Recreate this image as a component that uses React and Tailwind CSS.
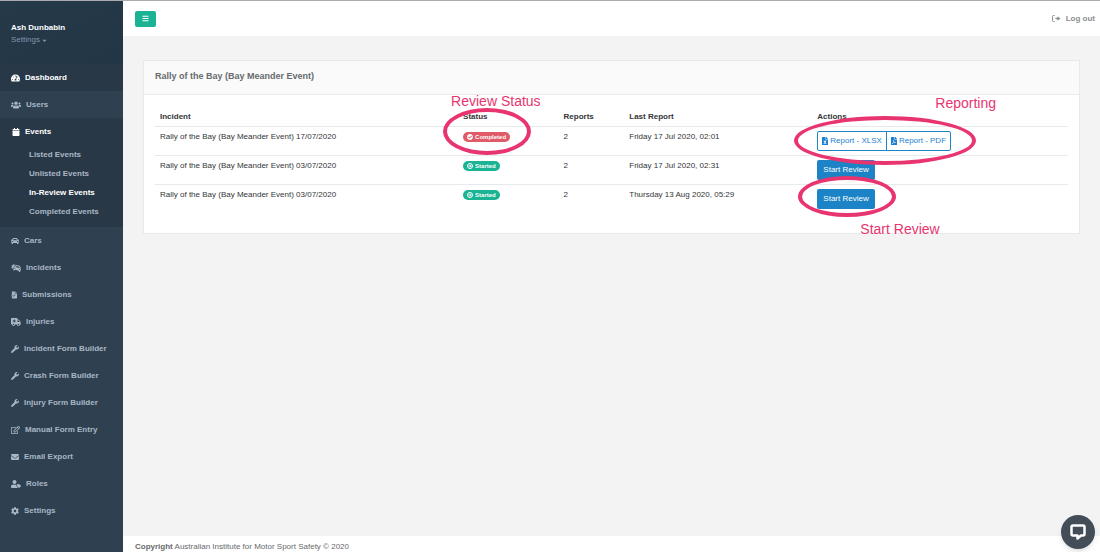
import { useState } from "react";

//PACKAGES
import clsx from "clsx";
import {
  FaAmbulance,
  FaBars,
  FaCar,
  FaCarCrash,
  FaCaretDown,
  FaCheckCircle,
  FaCog,
  FaEnvelope,
  FaFileExcel,
  FaFileMedicalAlt,
  FaFilePdf,
  FaRegEdit,
  FaTachometerAlt,
  FaUserTag,
  FaUsers,
  FaWrench,
} from "react-icons/fa";

//CONSTANTS
const EVENT_LINKS = [
  "Listed Events",
  "Unlisted Events",
  "In-Review Events",
  "Completed Events",
];

const MENU = [
  { label: "Dashboard", icon: FaTachometerAlt, size: "w-[9px]", dark: true },
  { label: "Users", icon: FaUsers, size: "w-[10px]" },
  { label: "Events", icon: CalendarIcon, size: "w-[9px]", dark: true, children: EVENT_LINKS },
  { label: "Cars", icon: FaCar, size: "w-2" },
  { label: "Incidents", icon: FaCarCrash, size: "w-[10px]" },
  { label: "Submissions", icon: FaFileMedicalAlt, size: "w-[6px]" },
  { label: "Injuries", icon: FaAmbulance, size: "w-[10px]" },
  { label: "Incident Form Builder", icon: FaWrench, size: "w-2" },
  { label: "Crash Form Builder", icon: FaWrench, size: "w-2" },
  { label: "Injury Form Builder", icon: FaWrench, size: "w-2" },
  { label: "Manual Form Entry", icon: FaRegEdit, size: "w-[9px]" },
  { label: "Email Export", icon: FaEnvelope, size: "w-2" },
  { label: "Roles", icon: FaUserTag, size: "w-[10px]" },
  { label: "Settings", icon: FaCog, size: "w-2" },
];

const ROWS = [
  { incident: "Rally of the Bay (Bay Meander Event) 17/07/2020", status: "Completed", reports: 2, last: "Friday 17 Jul 2020, 02:01" },
  { incident: "Rally of the Bay (Bay Meander Event) 03/07/2020", status: "Started", reports: 2, last: "Friday 17 Jul 2020, 02:31" },
  { incident: "Rally of the Bay (Bay Meander Event) 03/07/2020", status: "Started", reports: 2, last: "Thursday 13 Aug 2020, 05:29" },
];

//ICONS
function CalendarIcon({ className }) {
  return (
    <svg viewBox="0 0 18 16" className={className} fill="currentColor">
      <path d="M6 0h2v2h4V0h2v2h1.500a1.500 1.500 0 0 1 1.500 1.500V5H3V3.500A1.500 1.500 0 0 1 4.500 2H6zM3 6h14v8.500a1.500 1.500 0 0 1-1.500 1.500h-11A1.500 1.500 0 0 1 3 14.500z" />
    </svg>
  );
}

function StartedIcon() {
  return (
    <svg viewBox="0 0 12 12" className="size-[6px]" fill="none" stroke="currentColor" strokeWidth="2">
      <circle cx="6" cy="6" r="5" />
      <path d="M3 6h5M6 3.500 8.500 6 6 8.500" />
    </svg>
  );
}

function LogoutIcon() {
  return (
    <svg viewBox="0 0 18 14" className="h-[7px] w-[9px]" fill="none" stroke="currentColor" strokeWidth="2">
      <path d="M5.500 1H3a2 2 0 0 0-2 2v8a2 2 0 0 0 2 2h2.500" />
      <path d="M7 7h5" strokeWidth="3" />
      <path d="M11 2.500 17 7l-6 4.500z" fill="currentColor" stroke="none" />
    </svg>
  );
}

function Sidebar({ active, onSelect }) {
  return (
    <nav className="w-[123px] shrink-0 bg-[#2f4050] text-[8px] leading-3 font-bold text-[#a9b7c6]">
      <div className="h-[63px] pt-[21px] pl-[11px] bg-linear-to-br from-[#263949] to-[#233646]">
        <div className="text-white">Ash Dunbabin</div>
        <button type="button" className="flex items-center gap-px font-normal text-[#8095a8]">
          Settings <FaCaretDown className="size-[7px]" />
        </button>
      </div>
      <ul>
        {MENU.map(({ label, icon: Icon, size, dark, children }) => (
          <li key={label} className={clsx(dark && "bg-[#293846]")}>
            <a href="#" className={clsx("flex h-[27px] items-center gap-[5px] pl-[11px]", dark && "text-white")}>
              <Icon className={clsx("h-2", size)} />
              {label}
            </a>
            {children && (
              <ul className="pb-[6px]">
                {children.map((child) => (
                  <li key={child}>
                    <a
                      href="#"
                      onClick={() => onSelect(child)}
                      className={clsx("flex h-[19px] items-center pl-[29px]", child === active && "text-white")}
                    >
                      {child}
                    </a>
                  </li>
                ))}
              </ul>
            )}
          </li>
        ))}
      </ul>
    </nav>
  );
}

function StatusBadge({ status }) {
  const completed = status === "Completed";
  return (
    <span
      className={clsx(
        "inline-flex h-[10px] items-center gap-[2px] rounded-full px-1 align-middle text-[6px] leading-[10px] font-bold text-white",
        completed ? "bg-[#e05a67]" : "bg-[#1ab394]"
      )}
    >
      {completed ? <FaCheckCircle className="size-[6px]" /> : <StartedIcon />}
      {status}
    </span>
  );
}

function ReportButtons() {
  return (
    <div className="inline-flex h-5 text-[8px] whitespace-nowrap text-[#1c7fd0]">
      <button type="button" className="flex items-center gap-[2px] rounded-l-[2px] border border-[#1c84c6] bg-white px-1">
        <FaFileExcel className="h-2 w-[6px]" /> Report - XLSX
      </button>
      <button type="button" className="-ml-px flex items-center gap-[2px] rounded-r-[2px] border border-[#1c84c6] bg-white px-1">
        <FaFilePdf className="h-2 w-[6px]" /> Report - PDF
      </button>
    </div>
  );
}

// Ring with a caption, laid over the table
function Callout({ ring, caption, text }) {
  return (
    <>
      <span className={clsx("pointer-events-none absolute z-10 rounded-[50%] border-4 border-[#e8356f]", ring)} />
      <span className={clsx("pointer-events-none absolute z-10 text-[14px] leading-4 whitespace-nowrap text-[#e8356f]", caption)}>
        {text}
      </span>
    </>
  );
}

function IncidentTable() {
  return (
    <table className="w-full table-fixed text-left text-[8px] leading-3 text-[#333537]">
      <thead>
        <tr>
          <th className="w-[33.2%] px-[5px] pt-[5px] pb-[3px]">Incident</th>
          <th className="w-[11%] px-[5px] pt-[5px] pb-[3px]">Status</th>
          <th className="w-[7.2%] px-[5px] pt-[5px] pb-[3px]">Reports</th>
          <th className="w-[20.6%] px-[5px] pt-[5px] pb-[3px]">Last Report</th>
          <th className="px-[5px] pt-[5px] pb-[3px]">Actions</th>
        </tr>
      </thead>
      <tbody>
        {ROWS.map((row, index) => (
          <tr key={index} className="border-t border-[#e7eaec] align-top">
            <td className="px-[5px] py-1">{row.incident}</td>
            <td className="relative px-[5px] py-1">
              <StatusBadge status={row.status} />
              {index === 0 && (
                <Callout
                  ring="-top-[19px] -left-[15px] h-[47px] w-[88px]"
                  caption="-top-[34px] -left-[7px]"
                  text="Review Status"
                />
              )}
            </td>
            <td className="px-[5px] py-1">{row.reports}</td>
            <td className="px-[5px] py-1">{row.last}</td>
            <td className="relative h-7 px-[5px] py-1">
              {row.status === "Completed" ? (
                <ReportButtons />
              ) : (
                <button type="button" className="block h-5 rounded-[2px] bg-[#1c84c6] px-[6px] text-white">
                  Start Review
                </button>
              )}
              {index === 0 && (
                <Callout
                  ring="-top-[11px] -left-[18px] h-[49px] w-[182px]"
                  caption="-top-8 left-[123px]"
                  text="Reporting"
                />
              )}
              {index === 2 && (
                <Callout
                  ring="-top-[9px] -left-[14px] h-[41px] w-[98px]"
                  caption="top-9 left-12"
                  text="Start Review"
                />
              )}
            </td>
          </tr>
        ))}
      </tbody>
    </table>
  );
}

function App() {
  const [active, setActive] = useState("In-Review Events");

  return (
    <div className="flex min-h-screen border-t border-[#a9abae] bg-[#f3f3f4] font-['Liberation_Sans',Arial,sans-serif] text-[#676a6c]">
      <Sidebar active={active} onSelect={setActive} />

      <div className="flex min-w-0 flex-1 flex-col">
        <header className="flex h-[35px] items-center justify-between bg-white pr-[5px] pl-3">
          <button type="button" aria-label="Toggle menu" className="flex h-4 w-[21px] items-center justify-center rounded-[2px] bg-[#1ab394] text-white">
            <FaBars className="size-[7px]" />
          </button>
          <a href="#" className="flex items-center gap-[5px] text-[8px] font-bold text-[#8c8e91]">
            <LogoutIcon />
            Log out
          </a>
        </header>

        <main className="flex-1 px-5 pt-6">
          <section className="border border-[#e7eaec] bg-white">
            <h5 className="h-[34px] border-b border-[#e7eaec] bg-[#fafafb] px-[11px] pt-[7px] text-[9px] leading-4 font-bold">
              Rally of the Bay (Bay Meander Event)
            </h5>
            <div className="px-[11px] pt-[11px] pb-5">
              <IncidentTable />
            </div>
          </section>
        </main>

        <footer className="h-4 bg-white pt-1 pl-3 text-[8px] leading-[14px]">
          <strong>Copyright</strong> Australian Institute for Motor Sport Safety © 2020
        </footer>
      </div>

      <button
        type="button"
        aria-label="Open chat"
        className="fixed right-[5px] bottom-[3px] z-20 flex size-[34px] items-center justify-center rounded-full bg-[#424d57] text-white shadow-md"
      >
        <svg viewBox="0 0 16 16" className="size-4" fill="none" stroke="currentColor" strokeWidth="2.500" strokeLinejoin="round">
          <path d="M3 1.500h10Q14.500 1.500 14.500 3v7Q14.500 11.500 13 11.500h-2L7.500 14.500v-3H3Q1.500 11.500 1.500 10V3Q1.500 1.500 3 1.500z" />
        </svg>
      </button>
    </div>
  );
}

export default App;
